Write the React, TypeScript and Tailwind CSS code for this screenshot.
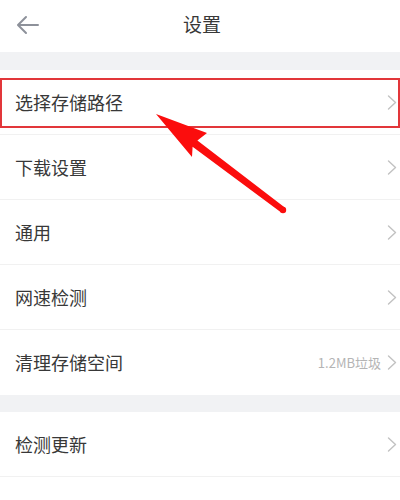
// Settings list, rows in order. `extra` shows a grey hint before the chevron.
const GROUP_ONE = [
  { label: "选择存储路径", highlight: true },
  { label: "下载设置" },
  { label: "通用" },
  { label: "网速检测" },
  { label: "清理存储空间", extra: "1.2MB垃圾" },
];

const GROUP_TWO = [{ label: "检测更新" }];

const FONT = { fontFamily: '"Noto Sans CJK SC", "Liberation Sans", sans-serif' };

type Row = { label: string; extra?: string; highlight?: boolean };

function Chevron() {
  return (
    <svg width="10" height="15" viewBox="0 0 10 15" fill="none" stroke="#c2c2c2" strokeWidth="1.4" strokeLinecap="round" strokeLinejoin="round">
      <path d="M1.5 1l7 6.5-7 6.5" />
    </svg>
  );
}

function SettingRow({ row, last }: { row: Row; last?: boolean }) {
  return (
    <div
      className={`relative flex h-[65px] items-center justify-between bg-white pl-[15px] pr-[3px] ${
        last ? "" : "border-b border-[#f1f1f1]"
      }`}
    >
      <span className="text-[18px] text-[#383838]">{row.label}</span>
      <div className="flex items-center gap-[6px]">
        {row.extra && <span className="text-[13px] text-[#b4b4b4]">{row.extra}</span>}
        <Chevron />
      </div>
      {row.highlight && (
        <div className="pointer-events-none absolute inset-x-0 top-[8px] bottom-[6px] border-2 border-[#e2363a]" />
      )}
    </div>
  );
}

export default function App() {
  return (
    <div className="relative h-[500px] w-[400px] overflow-hidden bg-white" style={FONT}>
      <header className="relative flex h-[52px] items-center justify-center bg-white pb-[3px]">
        <svg
          className="absolute left-[16px] top-[15px]"
          width="24"
          height="20"
          viewBox="0 0 24 20"
          fill="none"
          stroke="#8d919a"
          strokeWidth="2"
          strokeLinecap="round"
          strokeLinejoin="round"
        >
          <path d="M22 10H3M10 2L2 10l8 8" />
        </svg>
        <h1 className="pl-[4px] text-[19px] text-[#383838]">设置</h1>
      </header>

      <div className="h-[18px] bg-[#f1f2f4]" />
      {GROUP_ONE.map((row, i) => (
        <SettingRow key={row.label} row={row} last={i === GROUP_ONE.length - 1} />
      ))}

      <div className="h-[17px] bg-[#f1f2f4]" />
      {GROUP_TWO.map((row) => (
        <SettingRow key={row.label} row={row} />
      ))}

      {/* annotation arrow pointing at the first row */}
      <svg className="pointer-events-none absolute inset-0" width="400" height="500">
        <polygon
          points="156,114 207,133 197.4,140.4 284.8,207.6 281.2,212.4 192.6,146.8 192,157"
          fill="#fb0d0d"
        />
        <circle cx="283" cy="210" r="3.2" fill="#fb0d0d" />
      </svg>
    </div>
  );
}
